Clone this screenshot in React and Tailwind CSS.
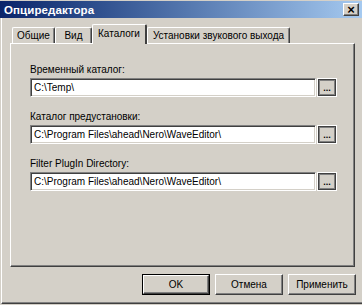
import React from "react";

const raised =
  "border border-t-white border-l-white border-r-[#404040] border-b-[#404040] shadow-[inset_-1px_-1px_#808080]";
const sunken =
  "border border-t-[#808080] border-l-[#808080] border-r-white border-b-white shadow-[inset_1px_1px_#404040,inset_-1px_-1px_#d4d0c8]";

function Field({ label, value }) {
  return (
    <div className="flex flex-col mb-[13px]">
      <div className="h-[13px] leading-[13px] text-[10px] text-black">{label}</div>
      <div className="mt-[2px] flex items-center h-[19px]">
        <div className={`w-[286px] h-[19px] bg-white ${sunken} flex items-center pl-[3px] text-[10px] leading-[13px] text-black whitespace-nowrap overflow-hidden`}>
          {value}
        </div>
        <div className="ml-[1px] w-[20px] h-[19px] bg-[#d4d0c8] border border-white shadow-[inset_1px_1px_#404040,inset_-1px_-1px_#404040,inset_2px_2px_#808080,inset_-2px_-2px_#808080] flex items-end justify-center pb-[3px] text-[9px] leading-[9px] font-bold text-black">
          ...
        </div>
      </div>
    </div>
  );
}

function Tab({ w, children, active }) {
  if (active) {
    return (
      <div
        className={`relative z-10 h-[20px] -mb-[1px] bg-[#d4d0c8] border-t border-l border-t-white border-l-white border-r-2 border-r-[#404040] rounded-t-[2px] flex items-center justify-center text-[10px] text-black leading-[13px] pb-[2px]`}
        style={{ width: w }}
      >
        {children}
      </div>
    );
  }
  return (
    <div
      className={`h-[16px] bg-[#d4d0c8] border-t border-l border-t-white border-l-white border-r border-r-[#404040] shadow-[inset_-1px_0_#808080] rounded-t-[2px] flex items-center justify-center text-[10px] text-black leading-[13px] whitespace-nowrap`}
      style={{ width: w }}
    >
      {children}
    </div>
  );
}

function Btn({ children, def }) {
  const inner = (
    <div className={`w-full h-full ${raised} flex items-center justify-center text-[10px] text-black`}>
      {children}
    </div>
  );
  if (def) {
    return <div className="w-[68px] h-[21px] border border-black">{inner}</div>;
  }
  return <div className="w-[68px] h-[21px]">{inner}</div>;
}

export default function App() {
  return (
    <div
      className="w-[362px] h-[305px] bg-[#d4d0c8] overflow-hidden flex flex-col"
      style={{ fontFamily: '"Liberation Sans", Arial, sans-serif' }}
    >
      <div className="mt-[1px] h-[17px] shrink-0 bg-gradient-to-r from-[#0a246a] to-[#a6caf0] flex items-center justify-between pl-[4px] pr-[3px]">
        <span className="text-white font-bold text-[11.5px] leading-[14px] tracking-[0.1px]">Опциредактора</span>
        <div className={`w-[16px] h-[13px] bg-[#d4d0c8] ${raised} flex items-center justify-center text-[13px] leading-[13px] font-bold text-black`}>
          ×
        </div>
      </div>
      <div className="flex-1 flex flex-col border-l border-l-white ml-[1px] border-b border-b-[#404040] mb-[1px] shadow-[inset_0_-1px_#808080]">
        <div className="h-[25px] flex items-end pl-[10px] shrink-0">
          <Tab w={43}>Общие</Tab>
          <Tab w={37}>Вид</Tab>
          <Tab w={55} active>Каталоги</Tab>
          <Tab w={143}>Установки звукового выхода</Tab>
        </div>
        <div className="ml-[8px] w-[345px] h-[224px] border border-t-white border-l-white border-r-[#404040] border-b-[#404040] shadow-[inset_-1px_-1px_#808080] pt-[19px] pl-[19px] flex flex-col">
          <Field label="Временный каталог:" value="C:\Temp\" />
          <Field label="Каталог предустановки:" value="C:\Program Files\ahead\Nero\WaveEditor\" />
          <Field label="Filter PlugIn Directory:" value="C:\Program Files\ahead\Nero\WaveEditor\" />
        </div>
        <div className="mt-[7px] flex justify-end gap-[5px] pr-[6px]">
          <Btn def>OK</Btn>
          <Btn>Отмена</Btn>
          <Btn>Применить</Btn>
        </div>
      </div>
    </div>
  );
}
